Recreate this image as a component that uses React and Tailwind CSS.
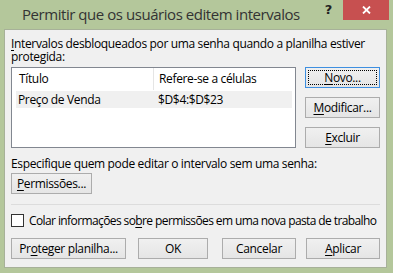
import React from "react";

function Btn({ children, className = "", focused = false }) {
  if (focused) {
    return (
      <div className={`h-[21px] border border-[#3e8fe0] bg-gradient-to-b from-[#f0f0f0] to-[#e5e5e5] p-[2px] ${className}`}>
        <div className="h-full w-full border border-dotted border-black flex items-center justify-center leading-[12px]">
          {children}
        </div>
      </div>
    );
  }
  return (
    <div className={`h-[21px] border border-[#acacac] bg-gradient-to-b from-[#f0f0f0] to-[#e5e5e5] flex items-center justify-center leading-[12px] whitespace-nowrap ${className}`}>
      {children}
    </div>
  );
}

function U({ children }) {
  return <span className="inline-block leading-[12px] underline underline-offset-[2px] decoration-[1px]">{children}</span>;
}

export default function App() {
  return (
    <div className="w-[393px] h-[273px] bg-[#b4c79b] flex flex-col overflow-hidden font-['Open_Sans',sans-serif] text-[12px] tracking-[-0.35px] text-black">
      {/* title bar */}
      <div className="h-[29px] flex items-start shrink-0">
        <div className="ml-[22px] mt-[4px] text-[15px] leading-[20px] text-[#333333] tracking-[-0.45px] whitespace-nowrap">
          Permitir que os usuários editem intervalos
        </div>
        <div className="ml-auto mt-[3px] text-[13px] leading-[14px] font-bold text-[#222] font-['DejaVu_Sans',sans-serif]">?</div>
        <div className="ml-[11px] mr-[4px] w-[46px] h-[20px] bg-[#c75050] flex items-center justify-center">
          <svg width="9" height="8" viewBox="0 0 9 8">
            <path d="M1 0.5 L8 7.5 M8 0.5 L1 7.5" stroke="white" strokeWidth="1.8" />
          </svg>
        </div>
      </div>

      {/* panel */}
      <div className="ml-[4px] mr-[6px] h-[239px] shrink-0 border border-[#a7b199] bg-[#f0f0f0] px-[6px] flex flex-col">
        <div className="mt-[7px] flex flex-col whitespace-nowrap">
          <div className="h-[13px] leading-[13px]">
            <U>I</U>ntervalos desbloqueados por uma senha quando a planilha estiver
          </div>
          <div className="h-[13px] leading-[13px]">protegida:</div>
        </div>

        <div className="mt-[4px] flex">
          <div className="w-[285px] h-[81px] border border-[#828790] bg-white flex flex-col">
            <div className="h-[22px] flex items-center shrink-0">
              <div className="w-[141px] pl-[7px] h-full flex items-center leading-[12px]">Título</div>
              <div className="w-[1px] h-full bg-[#e5e5e5]"></div>
              <div className="pl-[5px] leading-[12px]">Refere-se a células</div>
            </div>
            <div className="mt-[1px] ml-[4px] w-[276px] h-[17px] bg-[#f0f0f0] flex items-center leading-[12px]">
              <div className="w-[142px] pl-[2px]">Preço de Venda</div>
              <div>$D$4:$D$23</div>
            </div>
          </div>
          <div className="ml-[9px] w-[75px] flex flex-col gap-[9px]">
            <Btn focused>
              <U>N</U>ovo...
            </Btn>
            <Btn>
              <U>M</U>odificar...
            </Btn>
            <Btn>
              <U>E</U>xcluir
            </Btn>
          </div>
        </div>

        <div className="mt-[9px] leading-[13px] whitespace-nowrap">Especifique quem pode editar o intervalo sem uma senha:</div>
        <Btn className="mt-[3px] w-[81px]">
          <U>P</U>ermissões...
        </Btn>

        <div className="mt-[10px] h-[1px] bg-[#dcdcdc]"></div>

        <div className="mt-[9px] flex items-center">
          <div className="w-[13px] h-[13px] border border-[#333333] bg-white shrink-0"></div>
          <div className="ml-[5px] leading-[13px] whitespace-nowrap tracking-[-0.6px]">
            Colar informações so<U>b</U>re permissões em uma nova pasta de trabalho
          </div>
        </div>

        <div className="mt-[11px] flex">
          <Btn className="w-[115px]">
            Pr<U>o</U>teger planilha...
          </Btn>
          <Btn className="ml-[12px] w-[70px]">OK</Btn>
          <Btn className="ml-[14px] w-[74px]">Cancelar</Btn>
          <Btn className="ml-[10px] w-[74px]">
            <U>A</U>plicar
          </Btn>
        </div>
      </div>
    </div>
  );
}
